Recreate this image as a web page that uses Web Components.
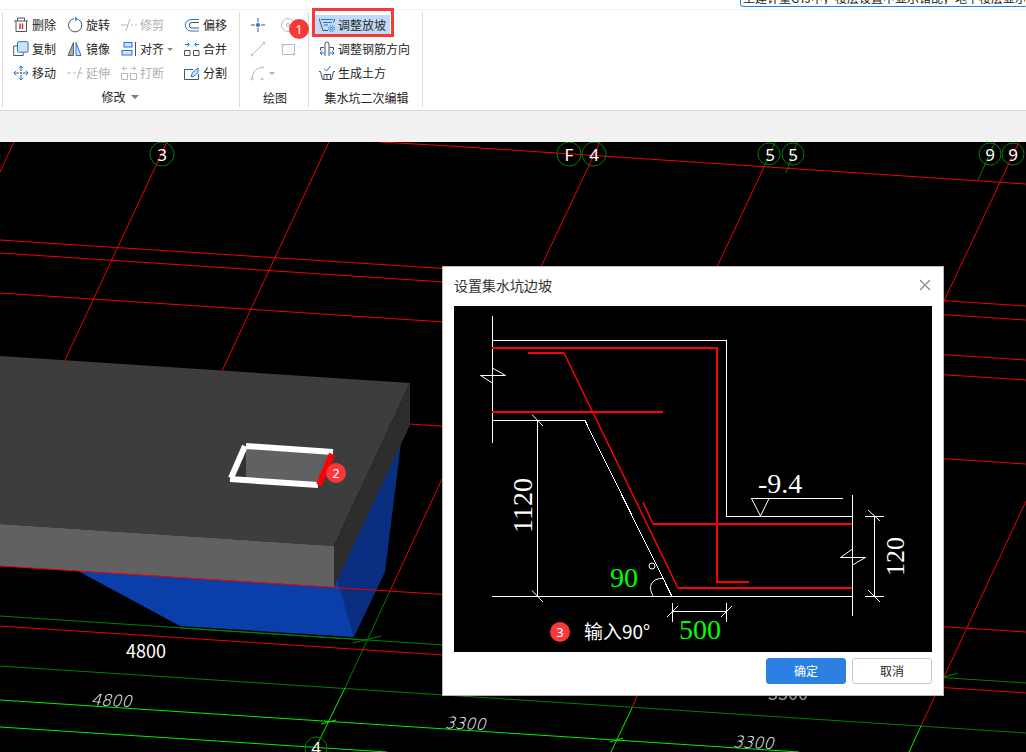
<!DOCTYPE html>
<html lang="zh-CN">
<head>
<meta charset="UTF-8">
<meta name="viewport" content="width=device-width, initial-scale=1">
<title>设置集水坑边坡</title>
<style>
  html, body {
    margin: 0;
    height: 100%;
  }

  body {
    font-family: "Noto Sans CJK SC", sans-serif;
    font-size: 12px;
    line-height: 18px;
    color: #262626;
    background: #fff;
  }
</style>
</head>
<body>
<modeling-app></modeling-app>

<script>
// 16x16 toolbar icons. "d" = dark stroke, "b" = blue stroke
const ICONS = {
  remove: `<path class="d" d="M1 4h14M4.500 4V1h7v3M3 4v10.500h10.500V4"/><path d="M7 6.500v5.500M9.500 6.500v5.500" stroke="#e02020" stroke-width="1.400"/>`,
  copy: `<path class="d" d="M4 5H.7v9.500h9.500V12"/><rect class="b" x="4.500" y=".7" width="10.500" height="10.500" rx="1" fill="#cfe3fb"/>`,
  move: `<path class="d" d="M8 4v8M4 8h8" stroke-dasharray="2 1"/><path class="b" d="M8 4V1M5.700 3.200L8 .9l2.300 2.300M8 12v3M5.700 12.800L8 15.100l2.300-2.300M4 8H1M3.200 5.700L.9 8l2.300 2.300M12 8h3M12.800 5.700L15.100 8l-2.300 2.300"/>`,
  rotate: `<path class="d" d="M7 1.600A6.700 6.700 0 1 0 11.500 2.400"/><path class="b" d="M8 .2l2.500 1.800L8.500 4" fill="#1f75dc"/>`,
  mirror: `<path d="M6.500 1.500v13H1z" fill="#a9adb5" stroke="#555d6b"/><path class="b" d="M9 1.500v13h5z" fill="#cfe3fb"/>`,
  trim: `<path class="d" d="M0 8h7M10 8h2M14 8h2M5 14L9 2"/>`,
  extend: `<path class="d" d="M0 8h4M6 8h3M11 8h5M10 14l4-12"/>`,
  align: `<rect class="b" x="3" y="1.500" width="8" height="4.500" fill="#cfe3fb"/><rect class="b" x="1" y="9.500" width="10" height="4.500" fill="#cfe3fb"/><path class="d" d="M14.500 1v14"/>`,
  split: `<path class="d" d="M.5 8.500h6v6h-6zM9.500 8.500h6v6h-6z"/><path class="b" d="M6 3.500H1.500M3.500 1.500l-2 2 2 2M10 3.500h4.500M12.500 1.500l2 2-2 2"/>`,
  offset: `<path class="b" d="M15 2.500H7a5.700 5.700 0 0 0 0 11.500h8"/><path class="d" d="M15 5.500H8a2.700 2.700 0 0 0 0 5.500h7"/>`,
  merge: `<path class="d" d="M.5 9.500h5.500v5H.5zM9.500 9.500H15v5H9.500z"/><path class="b" d="M1 3.500h4M3.500 1.500l2 2-2 2M15 3.500h-4M12.500 1.500l-2 2 2 2"/>`,
  cut: `<path class="d" d="M9 4.500H.5v10H14.500V9"/><path class="b" d="M7 11.500l1.500-4L14 3v4.500L9.500 11.500z" fill="#cfe3fb"/>`,
  point: `<path class="d" d="M8 1v4M8 11v4M1 8h4M11 8h4"/><circle cx="8" cy="8" r="2" fill="#1f75dc"/>`,
  circle: `<circle class="d" cx="8" cy="8" r="6.500"/><circle class="d" cx="8" cy="8" r="1.500"/>`,
  line: `<path class="d" d="M3 13L13 3"/><circle class="d" cx="2" cy="14" r="1"/><circle class="d" cx="14" cy="2" r="1"/>`,
  rect: `<path class="d" d="M4 3.500h10.500v8M13 13.500H2.500v-8"/><circle class="d" cx="14" cy="13" r="1"/><circle class="d" cx="3" cy="4" r="1"/>`,
  arc: `<path class="d" d="M2 13Q3 4 11 2.500"/><circle class="d" cx="2" cy="14" r="1"/><circle class="d" cx="12.500" cy="2.500" r="1"/><circle class="d" cx="12" cy="14" r="1"/>`,
  slope: `<path class="d" d="M0 1.500l4 12h5M16 1.500l-1.500 4"/><path class="b" d="M2 2.500h12M4 5.500h9M5 8h4"/><g class="b"><circle cx="12.500" cy="11.500" r="2.800" stroke-dasharray="1.500 .7"/><circle cx="12.500" cy="11.500" r="1"/></g>`,
  rebar: `<path class="d" d="M5 6.500H1.500v3M10.500 6.500h4v3M6 15V3q0-2 2-2t2 2v12"/><path class="b" d="M5.500 12H1M3 10l-2 2 2 2M10.500 12H15M13 10l2 2-2 2"/>`,
  earth: `<path class="d" d="M0 6.500h1.500l2 8h9l2-8H16M5 9.500h6.500M8 9.500v5M5 14V9.500M11.500 14V9.500"/><path class="b" d="M5 3.500L7.500 6 11.500 1"/>`
};

class StepBadge extends HTMLElement {
  constructor() {
    super();
    this.attachShadow({ mode: 'open' });
    this.shadowRoot.innerHTML = `
      <style>
        :host {
          display: flex;
          align-items: center;
          justify-content: center;
          width: 20px;
          height: 20px;
          border-radius: 50%;
          background: #fb3838;
          color: #fff;
          font-family: "Noto Sans", sans-serif;
          font-size: 13px;
        }
      </style>
      <slot></slot>
    `;
  }
}
customElements.define('step-badge', StepBadge);

class RibbonTool extends HTMLElement {
  connectedCallback() {
    this.attachShadow({ mode: 'open' });
    const disabled = this.hasAttribute('disabled') ? 'disabled' : '';
    const name = this.getAttribute('name');
    this.shadowRoot.innerHTML = `
      <style>
        :host {
          display: flex;
          align-items: center;
          --dark: #4a5262;
          --blue: #1f75dc;
          --arrow: #8a8a8a;
        }

        :host([disabled]) {
          --dark: #b8b8b8;
          --blue: #b8b8b8;
          --arrow: #b0b0b0;
        }

        button {
          position: relative;
          display: flex;
          align-items: center;
          gap: 3px;
          height: 20px;
          padding: 0 4px;
          border: 0;
          background: none;
          font: inherit;
          color: inherit;
          white-space: nowrap;
        }

        button:disabled {
          color: #b0b0b0;
        }

        :host([active]) button {
          background: #c2daf5;
        }

        /* callout frame round the highlighted command */
        :host([callout]) button::after {
          content: "";
          position: absolute;
          inset: -7px -4px -2px -3px;
          border: 3px solid #fb3838;
        }

        svg {
          flex: none;
          fill: none;
        }

        .d { stroke: var(--dark); }
        .b { stroke: var(--blue); }

        .arrow {
          border: 3px solid transparent;
          border-top-color: var(--arrow);
          border-bottom: 0;
        }
      </style>
      <button type="button" ${disabled} ${name ? `aria-label="${name}"` : ''}>
        <svg width="16" height="16" viewBox="0 0 16 16" aria-hidden="true">${ICONS[this.getAttribute('icon')]}</svg>
        <slot></slot>
        ${this.hasAttribute('menu') ? '<span class="arrow"></span>' : ''}
      </button>
    `;
  }
}
customElements.define('ribbon-tool', RibbonTool);

class RibbonGroup extends HTMLElement {
  connectedCallback() {
    this.attachShadow({ mode: 'open' });
    const label = this.getAttribute('label');
    this.shadowRoot.innerHTML = `
      <style>
        :host {
          display: flex;
          flex-direction: column;
          padding: 1px 8px 0 6px;
          border-left: 1px solid #dcdcdc;
        }

        :host(:last-of-type) {
          border-right: 1px solid #dcdcdc;
        }

        .tools {
          display: grid;
          grid-template-columns: var(--columns, auto);
          grid-auto-rows: 24px;
        }

        .label {
          display: flex;
          align-items: center;
          justify-content: center;
          gap: 5px;
          padding: 4px 0 0 4px;
          border: 0;
          background: none;
          font: inherit;
          color: inherit;
        }

        button.label {
          padding: 3px 0 1px;
        }

        .arrow {
          border: 4px solid transparent;
          border-top-color: #7a7a7a;
          border-bottom: 0;
        }
      </style>
      <div class="tools"><slot></slot></div>
      ${this.hasAttribute('menu')
        ? `<button class="label" type="button">${label}<span class="arrow"></span></button>`
        : `<div class="label">${label}</div>`}
    `;
  }
}
customElements.define('ribbon-group', RibbonGroup);

class AppRibbon extends HTMLElement {
  constructor() {
    super();
    this.attachShadow({ mode: 'open' });
    this.shadowRoot.innerHTML = `
      <style>
        :host {
          display: block;
          position: relative;
        }

        .strip {
          display: flex;
          align-items: flex-end;
          justify-content: flex-end;
          height: 7px;
          padding-bottom: 2px;
          border-bottom: 1px solid #f0f0f0;
          overflow: hidden;
        }

        input {
          box-sizing: border-box;
          flex: none;
          width: 288px;
          height: 24px;
          margin-right: -2px;
          padding: 4px 2px 0;
          border: 1px solid #1a86e8;
          border-radius: 3px;
          font: inherit;
          color: #1a1a1a;
        }

        .groups {
          display: flex;
          padding: 2px 2px 3px;
          border-bottom: 1px solid #d6d6d6;
        }

        .options {
          height: 31px;
          background: #f1f1f1;
        }

        .draw { --columns: 30px auto; }
        .modify { --columns: 54px 54px 63px auto; }

        step-badge {
          position: absolute;
          left: 289px;
          top: 19px;
        }
      </style>
      <div class="strip">
        <input type="text" aria-label="搜索" value="土建计量GTJ中，楼层设置中显示错乱，地下楼层显示错乱">
      </div>
      <div class="groups">
        <ribbon-group class="modify" label="修改" menu>
          <ribbon-tool icon="remove">删除</ribbon-tool>
          <ribbon-tool icon="rotate">旋转</ribbon-tool>
          <ribbon-tool icon="trim" disabled>修剪</ribbon-tool>
          <ribbon-tool icon="offset">偏移</ribbon-tool>
          <ribbon-tool icon="copy">复制</ribbon-tool>
          <ribbon-tool icon="mirror">镜像</ribbon-tool>
          <ribbon-tool icon="align" menu>对齐</ribbon-tool>
          <ribbon-tool icon="merge">合并</ribbon-tool>
          <ribbon-tool icon="move">移动</ribbon-tool>
          <ribbon-tool icon="extend" disabled>延伸</ribbon-tool>
          <ribbon-tool icon="split" disabled>打断</ribbon-tool>
          <ribbon-tool icon="cut">分割</ribbon-tool>
        </ribbon-group>
        <ribbon-group class="draw" label="绘图">
          <ribbon-tool icon="point" name="点"></ribbon-tool>
          <ribbon-tool icon="circle" name="圆" disabled></ribbon-tool>
          <ribbon-tool icon="line" name="直线" disabled></ribbon-tool>
          <ribbon-tool icon="rect" name="矩形" disabled></ribbon-tool>
          <ribbon-tool icon="arc" name="弧" disabled menu></ribbon-tool>
        </ribbon-group>
        <ribbon-group label="集水坑二次编辑">
          <ribbon-tool icon="slope" active callout>调整放坡</ribbon-tool>
          <ribbon-tool icon="rebar">调整钢筋方向</ribbon-tool>
          <ribbon-tool icon="earth">生成土方</ribbon-tool>
        </ribbon-group>
      </div>
      <div class="options"></div>
      <step-badge>1</step-badge>
    `;
  }
}
customElements.define('app-ribbon', AppRibbon);

class ModelView extends HTMLElement {
  constructor() {
    super();
    this.attachShadow({ mode: 'open' });
    this.shadowRoot.innerHTML = `
      <style>
        :host {
          display: block;
          position: relative;
          overflow: hidden;
          background: #000;
        }

        svg {
          position: absolute;
          inset: 0;
          width: 100%;
          height: 100%;
        }

        path, circle { fill: none; }
        .axis { stroke: #f00000; }
        .grid { stroke: #008000; }
        .dim { stroke: #00f000; }

        text {
          fill: #fff;
          font-size: 18px;
          text-anchor: middle;
        }

        .mark {
          font-family: "Noto Sans", sans-serif;
          font-size: 17px;
        }

        .faded { fill: #999; }

        .slant {
          fill: #fff;
          font-family: "DejaVu Sans Light", "DejaVu Sans", sans-serif;
          font-size: 16px;
          font-style: italic;
        }
      </style>
      <svg viewBox="0 142 1026 610" preserveAspectRatio="xMinYMin slice" role="img" aria-label="三维模型">
        <path class="axis" d="M14 142L0 172M167 142L65 360M329 142L222 371M600 142L541 267M764 167L717 267M1019 142L944 301
          M380 142L450 146L1026 184M0 240L1026 306M0 253L1026 320M0 293L1026 360M900 372L1026 380M409 424L1026 464
          M0 626L1026 693M442 479L390 591M1026 501L944 677M637 696L632 708M935 696L921 726"/>
        <path class="grid" d="M775 142L764 167M797 142L786 173M995 142L978 180
          M0 616L1026 683M0 666L1026 733M390 591L345 688M353 643L381 636M944 677L958 673"/>
        <path class="dim" d="M0 700L799 752M0 727L387 752M345 688L318 743M321 724L336 720M632 708L611 752M610 742L623 738M921 726L909 752"/>

        <polygon points="401,443 385,572 354,637 334,580" fill="#0a2e80"/>
        <polygon points="78,571 180,626 354,637 337,580" fill="#0a3ea8"/>
        <polygon points="0,356 410,383 334,546 0,524" fill="#3d3d3d"/>
        <polygon points="410,383 410,425 334,587 334,546" fill="#2d2d2d"/>
        <polygon points="0,524 334,546 334,587 0,566" fill="#616161"/>
        <path class="axis" d="M0 566L1026 632"/>
        <path class="grid" d="M180 628L366 640"/>

        <polygon points="246,449 330,454 317,483 246,478" fill="#616161"/>
        <polygon points="246,449 246,478 232,478" fill="#333"/>
        <path d="M246 446L333 452M245 446L231 478M230 479L318 485" stroke="#fff" stroke-width="6"/>
        <path d="M332 454L319 485" stroke="#f00" stroke-width="6"/>

        <g class="grid">
          <circle cx="162" cy="154" r="12"/>
          <circle cx="569" cy="154" r="12"/>
          <circle cx="594" cy="154" r="12"/>
          <circle cx="769" cy="154" r="11"/>
          <circle cx="793" cy="154" r="11"/>
          <circle cx="990" cy="154" r="11"/>
          <circle cx="1013" cy="154" r="11"/>
          <circle cx="316" cy="748" r="11"/>
        </g>
        <text class="mark" x="162" y="161">3</text>
        <text class="mark" x="569" y="161">F</text>
        <text class="mark" x="594" y="161">4</text>
        <text class="mark" x="770" y="161">5</text>
        <text class="mark" x="793" y="161">5</text>
        <text class="mark" x="990" y="161">9</text>
        <text class="mark" x="1013" y="161">9</text>
        <text class="mark" x="316" y="754">4</text>
        <text x="146" y="658">4800</text>
        <text class="faded" x="788" y="700">3300</text>
        <text class="slant" x="111" y="706" transform="rotate(3 111 706)">4800</text>
        <text class="slant" x="465" y="729" transform="rotate(3 465 729)">3300</text>
        <text class="slant" x="753" y="748" transform="rotate(3 753 748)">3300</text>
      </svg>
      <slot></slot>
    `;
  }
}
customElements.define('model-view', ModelView);

class SlopeDiagram extends HTMLElement {
  constructor() {
    super();
    this.attachShadow({ mode: 'open' });
    this.shadowRoot.innerHTML = `
      <style>
        :host {
          display: block;
          position: relative;
          background: #000;
        }

        svg {
          display: block;
          width: 100%;
        }

        path, circle {
          fill: none;
          stroke: #fff;
        }

        .edge { shape-rendering: crispEdges; }

        .rebar {
          stroke: #f00;
          stroke-width: 2;
        }

        .bent {
          stroke: #f00;
          stroke-width: 1.500;
        }

        text {
          fill: #fff;
          font-family: "Liberation Serif", serif;
          font-size: 28px;
        }

        .value { fill: #0f0; }
        .small { font-size: 26px; }

        .note {
          font-family: "Noto Sans CJK SC", sans-serif;
          font-size: 19px;
        }

        step-badge {
          position: absolute;
          left: 96px;
          top: 316px;
        }
      </style>
      <svg viewBox="454 306 478 346" role="img" aria-label="集水坑边坡剖面">
        <path class="edge" d="M492.500 316V443M492.500 340.500H726.500V516.500H852.500M492.500 420.500H585L672 596.500M492 596.500H852.500
          M852.500 495V616M537.500 420V597M672.500 603V622M726.500 603V622M672.500 611.500H726.500
          M751 498.500H843M874.500 516V597M865 516.500H884M865 596.500H884"/>
        <path d="M492.500 368L505.500 375.500H480.500L492.500 383M852.500 549L840.500 557.500H865.500L852.500 565
          M532 414.500L543 426M532 590.500L543 602M667 617L678 606M721 617L732 606M868 510L880 521M868 590L880 602
          M751.500 498.500L760.500 516L769 498.500M653 596Q647 585 655 580Q659 578 664 578.500"/>
        <circle cx="652" cy="566" r="3"/>
        <path class="rebar edge" d="M492 348H717V582H749M492 412H663M528 353H564M678 588H852M653 524H852"/>
        <path class="bent" d="M564 353L678 588M643 502L653 524"/>
        <text class="value" x="610" y="587">90</text>
        <text class="value" x="679" y="639">500</text>
        <text x="758" y="493">-9.4</text>
        <text transform="translate(532 533) rotate(-90)">1120</text>
        <text class="small" transform="translate(904 576) rotate(-90)">120</text>
        <text class="note" x="584" y="639">输入90°</text>
      </svg>
      <step-badge>3</step-badge>
    `;
  }
}
customElements.define('slope-diagram', SlopeDiagram);

class SlopeDialog extends HTMLElement {
  constructor() {
    super();
    this.attachShadow({ mode: 'open' });
    this.shadowRoot.innerHTML = `
      <style>
        :host {
          display: block;
          box-sizing: border-box;
          width: 502px;
          padding: 0 11px 11px;
          border: 1px solid #b8b8b8;
          background: #fff;
        }

        header {
          display: flex;
          align-items: center;
          justify-content: space-between;
          height: 36px;
          padding-bottom: 3px;
        }

        h2 {
          margin: 0;
          font-size: 14px;
          font-weight: 400;
          color: #333;
        }

        footer {
          display: flex;
          justify-content: flex-end;
          gap: 6px;
          padding-top: 6px;
        }

        button {
          width: 80px;
          height: 26px;
          padding: 0;
          border: 1px solid #c8c8c8;
          border-radius: 3px;
          background: #fff;
          font: inherit;
          color: #262626;
        }

        .primary {
          border-color: #2c80e2;
          background: #2c80e2;
          color: #fff;
        }

        .close {
          display: flex;
          align-items: center;
          justify-content: center;
          width: 14px;
          height: 14px;
          border: 0;
        }
      </style>
      <header>
        <h2>设置集水坑边坡</h2>
        <button class="close" type="button" aria-label="关闭">
          <svg width="12" height="12" viewBox="0 0 12 12" stroke="#888" stroke-width="1.200"><path d="M1 1l10 10M11 1L1 11"/></svg>
        </button>
      </header>
      <slope-diagram></slope-diagram>
      <footer>
        <button class="primary" type="button">确定</button>
        <button type="button">取消</button>
      </footer>
    `;
  }
}
customElements.define('slope-dialog', SlopeDialog);

class ModelingApp extends HTMLElement {
  constructor() {
    super();
    this.attachShadow({ mode: 'open' });
    this.shadowRoot.innerHTML = `
      <style>
        :host {
          display: flex;
          flex-direction: column;
          height: 100vh;
          overflow: hidden;
        }

        model-view { flex: 1; }

        step-badge {
          position: absolute;
          left: 326px;
          top: 321px;
        }

        slope-dialog {
          position: absolute;
          left: 442px;
          top: 124px;
        }
      </style>
      <app-ribbon></app-ribbon>
      <model-view>
        <step-badge>2</step-badge>
        <slope-dialog role="dialog" aria-label="设置集水坑边坡"></slope-dialog>
      </model-view>
    `;
  }
}
customElements.define('modeling-app', ModelingApp);
</script>
</body>
</html>
